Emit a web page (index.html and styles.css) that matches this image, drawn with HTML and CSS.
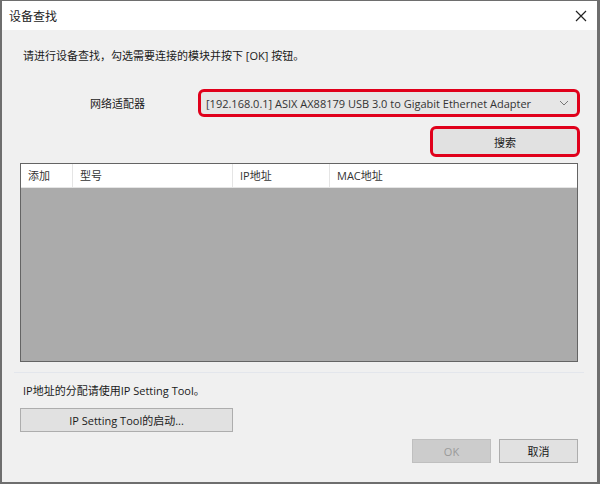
FILE: index.html
```html
<!DOCTYPE html>
<html lang="zh-CN">
<head>
  <meta charset="UTF-8">
  <title>设备查找</title>
  <link rel="stylesheet" href="styles.css">
</head>
<body>
  <div class="window">
    <div class="titlebar">
      <span class="title">设备查找</span>
      <svg class="close" width="12" height="12" viewBox="0 0 12 12">
        <path d="M1 1 L11 11 M11 1 L1 11" stroke="#222" stroke-width="1.2" fill="none"/>
      </svg>
    </div>
    <div class="content">
      <p class="intro">请进行设备查找，勾选需要连接的模块并按下 [OK] 按钮。</p>

      <div class="adapter-row">
        <span class="adapter-label">网络适配器</span>
        <div class="select hl">
          <span>[192.168.0.1] ASIX AX88179 USB 3.0 to Gigabit Ethernet Adapter</span>
          <svg width="10" height="6" viewBox="0 0 10 6"><path d="M1 1 L5 5 L9 1" stroke="#777" stroke-width="1" fill="none"/></svg>
        </div>
      </div>

      <div class="search-row">
        <button class="btn search hl">搜索</button>
      </div>

      <div class="list">
        <div class="list-head">
          <div class="col c1">添加</div>
          <div class="col c2">型号</div>
          <div class="col c3">IP地址</div>
          <div class="col c4">MAC地址</div>
        </div>
        <div class="list-body"></div>
      </div>

      <hr class="sep">

      <p class="note">IP地址的分配请使用IP Setting Tool。</p>
      <button class="btn tool">IP Setting Tool的启动...</button>

      <div class="footer">
        <button class="btn ok" disabled>OK</button>
        <button class="btn">取消</button>
      </div>
    </div>
  </div>
</body>
</html>
```

FILE: styles.css
```css
html, body {
  margin: 0;
  padding: 0;
}
body {
  font-family: "Open Sans", "Noto Sans CJK SC", sans-serif;
  font-size: 11px;
  color: #1a1a1a;
  background: #f0f0f0;
}
.window {
  width: 600px;
  height: 484px;
  box-sizing: border-box;
  border: 1px solid #6e6e6e;
  border-width: 1px 3px 2px 2px;
  background: #f0f0f0;
  display: flex;
  flex-direction: column;
}
.titlebar {
  height: 29px;
  background: #fff;
  display: flex;
  align-items: center;
  justify-content: space-between;
  padding: 0 9px 0 7px;
  flex-shrink: 0;
}
.title {
  font-size: 12px;
  color: #222;
}
.close {
  margin-right: 1px;
}
.content {
  flex: 1;
  padding: 0 19px 0 18px;
  display: flex;
  flex-direction: column;
}
.intro {
  margin: 18px 0 0 3px;
  line-height: 16px;
}
.adapter-row {
  display: flex;
  align-items: center;
  margin-top: 25px;
}
.adapter-label {
  width: 108px;
  padding-left: 70px;
}
.hl {
  border: 3px solid #e0001b !important;
  border-radius: 6px;
}
.select {
  flex: 1;
  height: 28px;
  box-sizing: border-box;
  margin-right: -2px;
  background: #e6e6e6;
  display: flex;
  align-items: center;
  justify-content: space-between;
  padding: 0 8px 0 5px;
  color: #333;
}
.search-row {
  display: flex;
  justify-content: flex-end;
  margin-top: 9px;
}
.btn {
  font-family: "Open Sans", "Noto Sans CJK SC", sans-serif;
  font-size: 11px;
  color: #1a1a1a;
  background: #e1e1e1;
  border: 1px solid #adadad;
  padding: 0;
  height: 24px;
  width: 79px;
}
.search {
  width: 150px;
  height: 31px;
  margin-right: -2px;
}
.list {
  margin-top: 6px;
  height: 199px;
  box-sizing: border-box;
  border: 1px solid #646464;
  display: flex;
  flex-direction: column;
}
.list-head {
  display: flex;
  height: 23px;
  background: #fff;
  border-bottom: 1px solid #e5e5e5;
  flex-shrink: 0;
}
.col {
  box-sizing: border-box;
  padding-left: 7px;
  line-height: 23px;
  border-right: 1px solid #e5e5e5;
  color: #333;
}
.c1 { width: 52px; }
.c2 { width: 160px; }
.c3 { width: 97px; }
.c4 { flex: 1; border-right: none; }
.list-body {
  flex: 1;
  background: #ababab;
}
.sep {
  margin: 10px -6px 0 -6px;
  border: none;
  border-top: 1px solid #e3e6ec;
  height: 0;
}
.note {
  margin: 10px 0 0 3px;
  line-height: 16px;
}
.tool {
  margin-top: 9px;
  width: 213px;
  height: 24px;
}
.footer {
  display: flex;
  justify-content: flex-end;
  gap: 8px;
  margin-top: 7px;
}
.ok {
  background: #cccccc;
  border-color: #bfbfbf;
  color: #9a9a9a;
}
```
